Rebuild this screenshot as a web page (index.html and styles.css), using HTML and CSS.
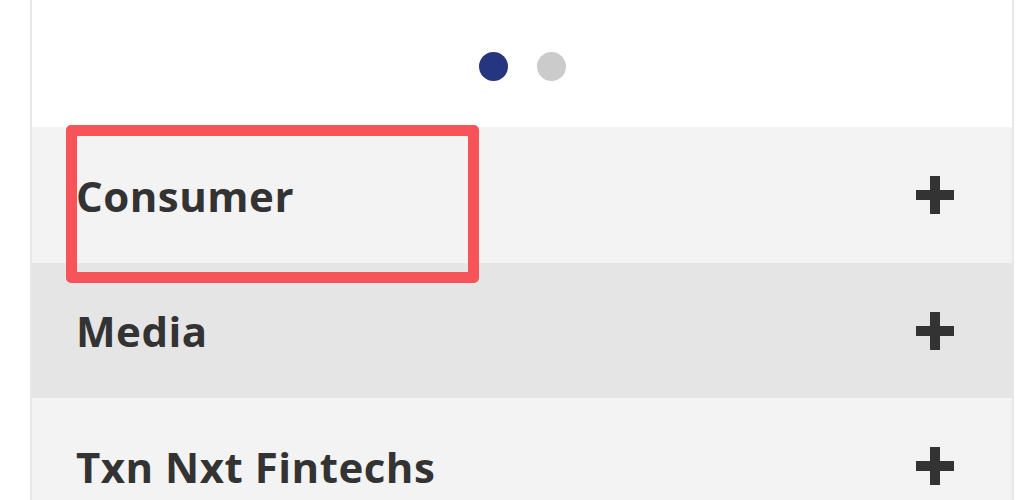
FILE: index.html
```html
<!DOCTYPE html>
<html lang="en">
<head>
    <meta charset="UTF-8">
    <meta name="viewport" content="width=device-width, initial-scale=1.0">
    <title>Sectors</title>
    <link rel="stylesheet" href="styles.css">
</head>
<body>
    <div class="panel">
        <div class="dots">
            <span class="dot active"></span>
            <span class="dot"></span>
        </div>

        <div class="accordion">
            <div class="item light first">
                <span class="title">Consumer</span>
                <span class="plus"></span>
                <!-- highlight box drawn over the first row -->
                <div class="highlight"></div>
            </div>
            <div class="item dark">
                <span class="title">Media</span>
                <span class="plus"></span>
            </div>
            <div class="item light">
                <span class="title">Txn Nxt Fintechs</span>
                <span class="plus"></span>
            </div>
        </div>
    </div>
</body>
</html>
```

FILE: styles.css
```css
body {
    margin: 0;
    background-color: #fff;
    font-family: 'Open Sans', 'Liberation Sans', sans-serif;
    overflow: hidden;
}

.panel {
    margin: 0 10px 0 30px;
    border-left: 2px solid #e8e8e8;
    border-right: 2px solid #e8e8e8;
    height: 500px;
    overflow: hidden;
}

.dots {
    height: 127px;
    display: flex;
    justify-content: center;
    align-items: center;
    gap: 29px;
    padding-top: 5px;
    box-sizing: border-box;
}

.dot {
    width: 29px;
    height: 29px;
    border-radius: 50%;
    background-color: #cbcbcb;
}

.dot.active {
    background-color: #26357f;
}

.item {
    position: relative;
    height: 136px;
    display: flex;
    align-items: center;
    justify-content: space-between;
    padding: 0 58px 0 44px;
}

.item.first {
    z-index: 2;
}

.item.light {
    background-color: #f3f3f3;
}

.item.dark {
    background-color: #e5e5e5;
    height: 135px;
}

.title {
    font-size: 42px;
    font-weight: 700;
    color: #333;
    letter-spacing: 0.5px;
}

.plus {
    position: relative;
    width: 38px;
    height: 38px;
}

.plus::before, .plus::after {
    content: "";
    position: absolute;
    background-color: #333;
}

.plus::before {
    left: 0;
    right: 0;
    top: 14px;
    height: 10px;
}

.plus::after {
    top: 0;
    bottom: 0;
    left: 14px;
    width: 10px;
}

.highlight {
    position: absolute;
    left: 34px;
    top: -2px;
    width: 391px;
    height: 136px;
    border: 11px solid #f7545a;
    border-radius: 5px;
}
```
